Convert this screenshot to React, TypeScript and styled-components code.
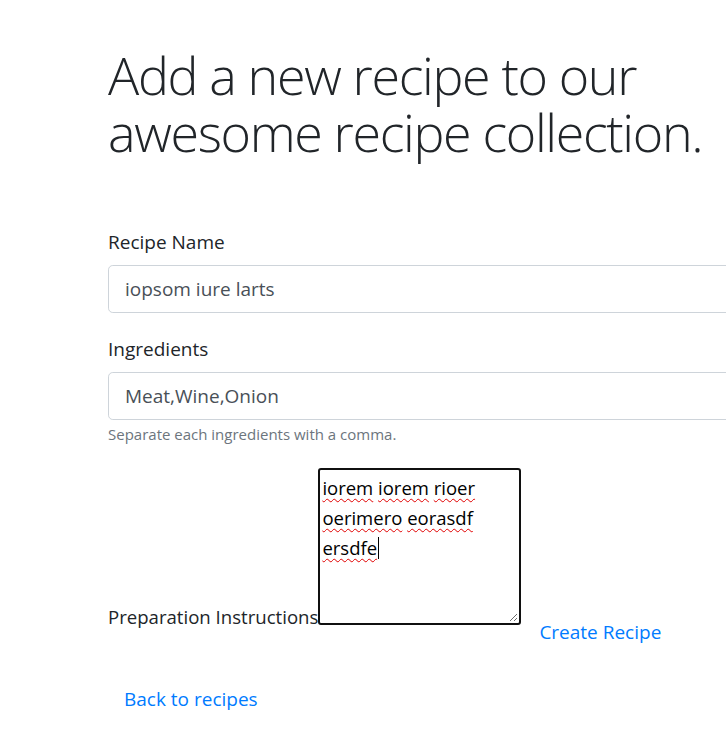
import * as React from 'react';
import styled, { createGlobalStyle } from 'styled-components';

const GlobalStyle = createGlobalStyle`
  html, body {
    margin: 0;
    padding: 0;
    overflow-x: hidden;
    background: #ffffff;
  }
  body {
    font-family: "Open Sans", "Noto Sans", sans-serif;
    color: #212529;
  }
  * { box-sizing: border-box; }
`;

export default function App() {
  const [name, setName] = React.useState<string>('iopsom iure larts');
  const [ingredients, setIngredients] = React.useState<string>('Meat,Wine,Onion');
  const notes = [['iorem', 'iorem', 'rioer'], ['oerimero', 'eorasdf'], ['ersdfe']];
  return (
    <Page>
      <GlobalStyle />
      <Heading>Add a new recipe to our awesome recipe collection.</Heading>
      <Form onSubmit={(e) => e.preventDefault()}>
        <Group>
          <Label htmlFor="name">Recipe Name</Label>
          <Input id="name" value={name} onChange={(e) => setName(e.target.value)} />
        </Group>
        <Group>
          <Label htmlFor="ingredients">Ingredients</Label>
          <Input id="ingredients" value={ingredients} onChange={(e) => setIngredients(e.target.value)} />
          <Help>Separate each ingredients with a comma.</Help>
        </Group>
        <InstructionRow>
          <InlineLabel>Preparation Instructions</InlineLabel>
          <NoteBox role="textbox">
            {notes.map((line, i) => (
              <NoteLine key={i}>
                {line.map((w, j) => (
                  <React.Fragment key={j}>
                    {j > 0 && ' '}
                    <Misspelled>{w}</Misspelled>
                  </React.Fragment>
                ))}
                {i === notes.length - 1 && <Caret />}
              </NoteLine>
            ))}
            <Grip width="10" height="10" viewBox="0 0 10 10">
              <path d="M9 2 L2 9 M9 6 L6 9" stroke="#6b6b6b" strokeWidth="1" />
            </Grip>
          </NoteBox>
          <LinkButton type="submit">Create Recipe</LinkButton>
        </InstructionRow>
      </Form>
      <BackLink href="#">Back to recipes</BackLink>
    </Page>
  );
}

const Page = styled.div`
  padding: 0 0 20px 108px;
  width: 800px;
`;

const Heading = styled.h1`
  margin: 46px 0 0;
  width: 610px;
  font-size: 52px;
  font-weight: 300;
  line-height: 57px;
  letter-spacing: -1.35px;
  color: #212529;
`;

const Form = styled.form`
  margin-top: 67px;
  display: flex;
  flex-direction: column;
`;

const Group = styled.div`
  display: flex;
  flex-direction: column;
  margin-bottom: 21px;
`;

const Label = styled.label`
  font-size: 19px;
  line-height: 30px;
  margin-bottom: 8px;
`;

const Input = styled.input`
  width: 660px;
  height: 48px;
  padding: 8px 16px;
  font-family: inherit;
  font-size: 19px;
  color: #495057;
  border: 1px solid #ced4da;
  border-radius: 4.8px;
  outline: none;
`;

const Help = styled.small`
  margin-top: 3px;
  font-size: 15px;
  line-height: 22px;
  color: #6c757d;
`;

const InstructionRow = styled.div`
  display: flex;
  align-items: flex-end;
  margin-top: 2px;
`;

const InlineLabel = styled.label`
  font-size: 18.6px;
  line-height: 24px;
  margin-bottom: -4px;
`;

const NoteBox = styled.div`
  position: relative;
  width: 203px;
  height: 157px;
  padding: 3px 2px;
  border: 2px solid #101010;
  border-radius: 3px;
  font-size: 18.5px;
  line-height: 30px;
  color: #000;
`;

const NoteLine = styled.div`
  white-space: nowrap;
`;

const Misspelled = styled.span`
  text-decoration: underline wavy #e00000;
  text-decoration-thickness: 1px;
  text-underline-offset: 3px;
`;

const Caret = styled.span`
  display: inline-block;
  width: 1px;
  height: 22px;
  margin-left: 1px;
  vertical-align: -4px;
  background: #000;
`;

const Grip = styled.svg`
  position: absolute;
  right: 1px;
  bottom: 1px;
`;

const LinkButton = styled.button`
  margin: 0 0 -30px 2px;
  padding: 8px 16px;
  border: none;
  background: transparent;
  font-family: inherit;
  font-size: 19px;
  line-height: 30px;
  color: #007bff;
  cursor: pointer;
`;

const BackLink = styled.a`
  display: inline-block;
  margin-top: 51px;
  padding: 8px 16px;
  font-size: 19px;
  line-height: 30px;
  color: #007bff;
  text-decoration: none;
`;
